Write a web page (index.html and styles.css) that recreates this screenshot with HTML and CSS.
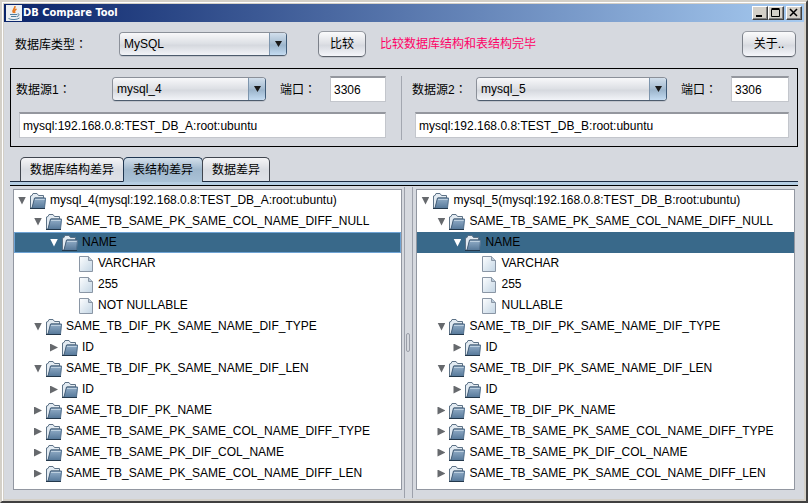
FILE: index.html
```html
<!DOCTYPE html>
<html lang="zh-CN">

<head>
  <meta charset="UTF-8">
  <title>DB Compare Tool</title>
  <link rel="stylesheet" href="styles.css">
</head>
<body>
  <svg class="defs" width="0" height="0">
    <defs>
      <linearGradient id="front" x1="0" y1="0" x2="0" y2="1">
        <stop offset="0" stop-color="#93aec8"/>
        <stop offset="1" stop-color="#587a9b"/>
      </linearGradient>
      <linearGradient id="paper" x1="0" y1="0" x2="1" y2="1">
        <stop offset="0" stop-color="#fdfeff"/>
        <stop offset="1" stop-color="#c3d5e4"/>
      </linearGradient>
    </defs>
    <symbol id="folder" viewBox="0 0 16 16">
      <path d="M.5 15V3L2 2.500L3 .5H7L8.500 2.500H13.500V5H5L2.500 15Z" fill="#e3ebf2" stroke="#5d7286"/>
      <path d="M4.500 5H16L14.500 15H2Z" fill="url(#front)"/>
      <path d="M2 15L4.500 5H15.500" fill="none" stroke="#47617b"/>
      <path d="M5 6.500H15" stroke="#bccfdf"/>
      <path d="M15.500 5L14.500 15" stroke="#54718d"/>
      <path d="M0 15.500H15" stroke="#23384c"/>
    </symbol>
    <symbol id="file" viewBox="0 0 14 16">
      <path d="M.5.5H9.500L13.500 4.500V15.500H.5Z" fill="url(#paper)" stroke="#8a96a5"/>
      <path d="M9.500.5V4.500H13.500" fill="#b9c9d8" stroke="#8a96a5"/>
    </symbol>
  </svg>

  <div class="window">
    <header class="titlebar">
      <svg class="logo" width="16" height="16" viewBox="0 0 16 16">
        <rect width="16" height="16" fill="#eceff2"/>
        <path d="M9 1C9.500 4 5.500 4 7.500 8M10.500 4C8.500 5 8 6 9 8" fill="none" stroke="#e9791f" stroke-width="1.500"/>
        <path d="M4 9.500H11M5 11.500H10.500M11.500 9C14 8.500 13.500 11 11 11.500M2.500 13.500C5 15 11 15 13.500 13" fill="none" stroke="#527f9e"/>
      </svg>
      <h1>DB Compare Tool</h1>
      <div class="controls">
        <button type="button" aria-label="最小化"><svg width="10" height="10"><path d="M1 8H7" stroke="#000" stroke-width="2"/></svg></button>
        <button type="button" aria-label="最大化"><svg width="10" height="10"><path d="M.5 1.500H8.500V8.500H.5ZM.5.5H8.500" fill="none" stroke="#000"/></svg></button>
        <button type="button" class="close" aria-label="关闭"><svg width="10" height="10"><path d="M1 1L8 8M8 1L1 8" stroke="#000" stroke-width="1.500"/></svg></button>
      </div>
    </header>

    <div class="toolbar">
      <label for="dbType">数据库类型<span class="colon" lang="zh-TW">：</span></label>
      <span class="combo type-combo"><select id="dbType"><option>MySQL</option></select></span>
      <button type="button" class="btn">比较</button>
      <span class="message">比较数据库结构和表结构完毕</span>
      <button type="button" class="btn about">关于..</button>
    </div>

    <div class="sources">
      <div class="source left">
        <div class="source-row">
          <label class="name" for="source1">数据源1<span class="colon" lang="zh-TW">：</span></label>
          <span class="combo"><select id="source1"><option>mysql_4</option></select></span>
          <label class="port-label" for="port1">端口<span class="colon" lang="zh-TW">：</span></label>
          <input class="port" id="port1" type="text" value="3306">
        </div>
        <input class="url" type="text" aria-label="数据源1" value="mysql:192.168.0.8:TEST_DB_A:root:ubuntu">
      </div>
      <div class="source right">
        <div class="source-row">
          <label class="name" for="source2">数据源2<span class="colon" lang="zh-TW">：</span></label>
          <span class="combo"><select id="source2"><option>mysql_5</option></select></span>
          <label class="port-label" for="port2">端口<span class="colon" lang="zh-TW">：</span></label>
          <input class="port" id="port2" type="text" value="3306">
        </div>
        <input class="url" type="text" aria-label="数据源2" value="mysql:192.168.0.8:TEST_DB_B:root:ubuntu">
      </div>
    </div>

    <div class="tabs">
      <button type="button">数据库结构差异</button>
      <button type="button" class="active">表结构差异</button>
      <button type="button">数据差异</button>
    </div>

    <div class="panes">
      <ul class="tree left">
        <li class="open"><svg class="icon"><use href="#folder"/></svg>mysql_4(mysql:192.168.0.8:TEST_DB_A:root:ubuntu)</li>
        <li class="open l2"><svg class="icon"><use href="#folder"/></svg>SAME_TB_SAME_PK_SAME_COL_NAME_DIFF_NULL</li>
        <li class="open l3 selected focus"><svg class="icon"><use href="#folder"/></svg>NAME</li>
        <li class="l4"><svg class="icon"><use href="#file"/></svg>VARCHAR</li>
        <li class="l4"><svg class="icon"><use href="#file"/></svg>255</li>
        <li class="l4"><svg class="icon"><use href="#file"/></svg>NOT NULLABLE</li>
        <li class="open l2"><svg class="icon"><use href="#folder"/></svg>SAME_TB_DIF_PK_SAME_NAME_DIF_TYPE</li>
        <li class="closed l3"><svg class="icon"><use href="#folder"/></svg>ID</li>
        <li class="open l2"><svg class="icon"><use href="#folder"/></svg>SAME_TB_DIF_PK_SAME_NAME_DIF_LEN</li>
        <li class="closed l3"><svg class="icon"><use href="#folder"/></svg>ID</li>
        <li class="closed l2"><svg class="icon"><use href="#folder"/></svg>SAME_TB_DIF_PK_NAME</li>
        <li class="closed l2"><svg class="icon"><use href="#folder"/></svg>SAME_TB_SAME_PK_SAME_COL_NAME_DIFF_TYPE</li>
        <li class="closed l2"><svg class="icon"><use href="#folder"/></svg>SAME_TB_SAME_PK_DIF_COL_NAME</li>
        <li class="closed l2"><svg class="icon"><use href="#folder"/></svg>SAME_TB_SAME_PK_SAME_COL_NAME_DIFF_LEN</li>
      </ul>
      <div class="splitter"><i></i></div>
      <ul class="tree right">
        <li class="open"><svg class="icon"><use href="#folder"/></svg>mysql_5(mysql:192.168.0.8:TEST_DB_B:root:ubuntu)</li>
        <li class="open l2"><svg class="icon"><use href="#folder"/></svg>SAME_TB_SAME_PK_SAME_COL_NAME_DIFF_NULL</li>
        <li class="open l3 selected"><svg class="icon"><use href="#folder"/></svg>NAME</li>
        <li class="l4"><svg class="icon"><use href="#file"/></svg>VARCHAR</li>
        <li class="l4"><svg class="icon"><use href="#file"/></svg>255</li>
        <li class="l4"><svg class="icon"><use href="#file"/></svg>NULLABLE</li>
        <li class="open l2"><svg class="icon"><use href="#folder"/></svg>SAME_TB_DIF_PK_SAME_NAME_DIF_TYPE</li>
        <li class="closed l3"><svg class="icon"><use href="#folder"/></svg>ID</li>
        <li class="open l2"><svg class="icon"><use href="#folder"/></svg>SAME_TB_DIF_PK_SAME_NAME_DIF_LEN</li>
        <li class="closed l3"><svg class="icon"><use href="#folder"/></svg>ID</li>
        <li class="closed l2"><svg class="icon"><use href="#folder"/></svg>SAME_TB_DIF_PK_NAME</li>
        <li class="closed l2"><svg class="icon"><use href="#folder"/></svg>SAME_TB_SAME_PK_SAME_COL_NAME_DIFF_TYPE</li>
        <li class="closed l2"><svg class="icon"><use href="#folder"/></svg>SAME_TB_SAME_PK_DIF_COL_NAME</li>
        <li class="closed l2"><svg class="icon"><use href="#folder"/></svg>SAME_TB_SAME_PK_SAME_COL_NAME_DIFF_LEN</li>
      </ul>
    </div>
  </div>
</body>

</html>
```
FILE: styles.css
```css
* {
  margin: 0;
  padding: 0;
  box-sizing: border-box;
  list-style: none;
}

body,
button,
input,
select {
  font: 12px/16px "Liberation Sans", "Noto Sans CJK SC", sans-serif;
  color: #000;
}

.defs {
  position: absolute;
}

.colon {
  font-family: "Noto Sans CJK TC", sans-serif;
}

.window {
  min-height: 100vh;
  display: flex;
  flex-direction: column;
  background: #d6d9df;
  border: 2px solid #d4d0c8;
  border-right-color: #404040;
  border-bottom-color: #404040;
  box-shadow: inset 1px 1px #fff, inset 0 0 0 2px #d4d0c8;
  padding: 2px;
}

/* title bar */
.titlebar {
  height: 18px;
  display: flex;
  align-items: center;
  gap: 1px;
  padding: 0 2px;
  background: linear-gradient(to right, #0a246a, #a6caf0);
}

.titlebar h1 {
  flex: 1;
  font: bold 11px/18px "DejaVu Sans Condensed", "DejaVu Sans", sans-serif;
  color: #fff;
}

.controls {
  display: flex;
}

.controls button {
  width: 16px;
  height: 14px;
  display: flex;
  align-items: center;
  justify-content: center;
  background: #d4d0c8;
  border: 1px solid;
  border-color: #fff #404040 #404040 #fff;
  box-shadow: inset -1px -1px #808080;
}

.controls .close {
  margin-left: 2px;
}

/* toolbar */
.toolbar {
  height: 46px;
  display: flex;
  align-items: center;
  padding: 0 8px 2px 11px;
}

.toolbar label {
  width: 104px;
}

.combo {
  position: relative;
  height: 24px;
  border: 1px solid;
  border-color: #8b9099 #3f5b78 #4d5c6d #8b9099;
  border-radius: 4px;
  overflow: hidden;
  box-shadow: 0 1px #c0c4cb;
}

.combo select {
  appearance: none;
  display: block;
  width: 100%;
  height: 22px;
  border: 0;
  padding: 0 20px 0 4px;
  background: linear-gradient(#f8f8fa, #dcdfe4 50%, #d5d8de 55%, #f2f4f8);
}

.combo::before {
  content: "";
  position: absolute;
  top: 0;
  right: 0;
  width: 16px;
  height: 100%;
  border-left: 1px solid #7d95ad;
  background: linear-gradient(#d2dfec, #a4bbd0 50%, #9cb5cc 55%, #c4dcf2);
  pointer-events: none;
}

.combo::after {
  content: "";
  position: absolute;
  top: 8px;
  right: 4px;
  width: 7px;
  height: 6px;
  background: #1a1a1a;
  clip-path: polygon(0 0, 100% 0, 50% 100%);
  pointer-events: none;
}

.type-combo {
  width: 168px;
  margin-right: 31px;
}

.btn {
  width: 48px;
  height: 26px;
  border: 1px solid;
  border-color: #989ca4 #7b8089 #5b6069 #7b8089;
  border-radius: 5px;
  background: linear-gradient(#fbfbfc, #dddfe4 50%, #d6d9df 55%, #f5f6fa);
  box-shadow: 0 1px #bfc3ca;
}

.message {
  margin-left: 14px;
  color: #ff0066;
}

.about {
  width: 54px;
  margin-left: auto;
}

/* data sources */
.sources {
  display: flex;
  margin: 0 6px;
  padding: 7px 0 6px;
  border: 1px solid #000;
}

.source {
  display: flex;
  flex-direction: column;
  gap: 10px;
}

.source.left {
  flex: 1 1 391px;
  padding: 0 15px 2px 8px;
  border-right: 1px solid #a3a7b0;
}

.source.right {
  flex: 1 1 395px;
  padding: 0 8px 2px 13px;
}

.source-row {
  display: flex;
  align-items: center;
}

.name {
  width: 96px;
  margin-left: -3px;
}

.right .name {
  width: 64px;
}

.source-row .combo {
  flex: 1;
}

.port-label {
  width: 50px;
  margin-left: 14px;
}

input {
  height: 26px;
  padding: 0 3px;
  border: 1px solid #c3c6cc;
  border-top: 2px solid #94979e;
  background: #fff;
}

.port {
  width: 56px;
}

.right .port {
  width: 58px;
}

/* tabs */
.tabs {
  display: flex;
  margin: 10px 6px 0;
  padding: 0 10px;
  border-bottom: 1px solid #1c2a40;
}

.tabs button {
  height: 25px;
  margin: 0 -1px -1px 0;
  padding: 0 9px;
  border: 1px solid #40454e;
  border-bottom-color: #1c2a40;
  border-radius: 5px 5px 0 0;
  background: linear-gradient(#f5f5f7, #d9dce2 50%, #dfe2e8);
}

.tabs .active {
  border-color: #1f3650;
  border-bottom-color: #a9c1d6;
  background: linear-gradient(#d4e0eb, #9fb7cc 50%, #a9c1d6);
}

/* trees */
.panes {
  flex: 1;
  display: flex;
  margin: 0 6px;
  padding: 3px 3px 9px;
  border-top: 4px solid #b5cde2;
  position: relative;
}

.panes::before {
  content: "";
  position: absolute;
  top: -1px;
  left: 0;
  right: 0;
  height: 1px;
  background: #000;
}

.tree {
  flex: 1 1 389px;
  min-width: 0;
  border: 1px solid #9297a1;
  background: #fff;
}

.tree.right {
  flex-basis: 379px;
}

.tree li {
  height: 21px;
  display: flex;
  align-items: center;
  gap: 4px;
  padding-left: 4px;
  line-height: 21px;
  white-space: nowrap;
}

.tree .l2 {
  padding-left: 20px;
}

.tree .l3 {
  padding-left: 36px;
}

.tree .l4 {
  gap: 5px;
  padding-left: 65px;
}

.tree .open::before,
.tree .closed::before {
  content: "";
  width: 8px;
  height: 8px;
  background: #66696d;
}

.tree .open::before {
  clip-path: polygon(0 0, 100% 0, 50% 100%);
}

.tree .closed::before {
  clip-path: polygon(0 0, 100% 50%, 0 100%);
}

.tree .selected {
  background: #39698a;
}

.tree .selected::before {
  background: #fff;
}

.tree .focus {
  box-shadow: inset 0 0 0 1px #6ea3d4;
}

.icon {
  width: 16px;
  height: 16px;
}

.l4 .icon {
  width: 14px;
}

.splitter {
  width: 10px;
  margin: -2px 3px -8px 2px;
  display: flex;
  align-items: center;
  justify-content: center;
  border: 1px solid #9da1ab;
  border-width: 0 1px;
}

.splitter i {
  width: 4px;
  height: 19px;
  border: 1px solid #9a9ea8;
  border-radius: 2px;
}
```
